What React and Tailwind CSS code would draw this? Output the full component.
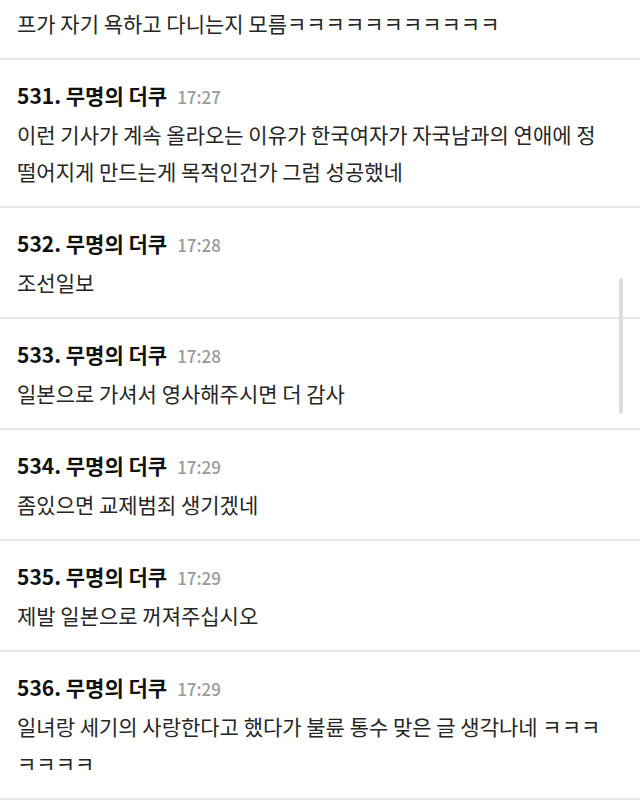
import React from "react";

const items = [
  { no: 531, time: "17:27", lines: ["이런 기사가 계속 올라오는 이유가 한국여자가 자국남과의 연애에 정", "떨어지게 만드는게 목적인건가 그럼 성공했네"] },
  { no: 532, time: "17:28", lines: ["조선일보"] },
  { no: 533, time: "17:28", lines: ["일본으로 가셔서 영사해주시면 더 감사"] },
  { no: 534, time: "17:29", lines: ["좀있으면 교제범죄 생기겠네"] },
  { no: 535, time: "17:29", lines: ["제발 일본으로 꺼져주십시오"] },
  { no: 536, time: "17:29", lines: ["일녀랑 세기의 사랑한다고 했다가 불륜 통수 맞은 글 생각나네 ㅋㅋㅋ", "ㅋㅋㅋㅋ"] },
];

const font = { fontFamily: '"Noto Sans CJK KR", "Noto Sans", sans-serif' };

export default function App() {
  return (
    <div className="relative w-[640px] h-[806px] overflow-hidden bg-white" style={font}>
      <div className="pl-[17px] pr-[16px] pt-[5px] pb-[16px]">
        <p className="h-[37px] text-[21px] leading-[37px] text-[#262626] whitespace-nowrap">
          프가 자기 욕하고 다니는지 모름ㅋㅋㅋㅋㅋㅋㅋㅋㅋㅋㅋ
        </p>
      </div>
      {items.map((it) => (
        <div key={it.no} className="border-t-2 border-[#e8e8e8] pl-[17px] pr-[16px] pt-[21px] pb-[16px]">
          <div className="flex h-[28px] items-baseline gap-[10px] leading-[28px] overflow-hidden">
            <span className="text-[21px] font-bold text-[#111]">{it.no}. 무명의 더쿠</span>
            <span className="text-[17px] font-medium text-[#9a9a9a]">{it.time}</span>
          </div>
          <div className="mt-[7px] text-[21px] leading-[37px] text-[#262626]">
            {it.lines.map((l, i) => (
              <p key={i} className="h-[37px] whitespace-nowrap">{l}</p>
            ))}
          </div>
        </div>
      ))}
      <div className="border-t-2 border-[#e8e8e8]" />
      <div className="absolute left-[619px] top-[278px] w-[4px] h-[136px] rounded-full bg-[#dedede]" />
    </div>
  );
}
